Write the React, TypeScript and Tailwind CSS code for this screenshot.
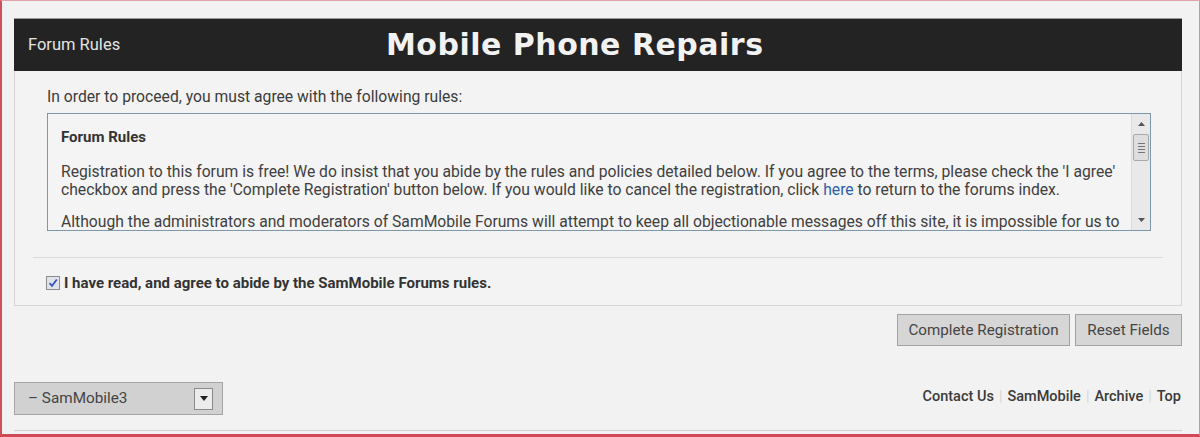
import React from "react";

function Scrollbar() {
  return (
    <div className="w-[19px] h-full bg-[#e9e9e9] border-l border-[#dcdcdc] flex flex-col items-center">
      <div className="h-[20px] w-full flex items-center justify-center">
        <svg width="7" height="4" viewBox="0 0 7 4"><path d="M3.5 0 L7 4 L0 4 Z" fill="#555" /></svg>
      </div>
      <div className="w-[16px] h-[27px] bg-[#dedede] border border-[#a9a9a9] rounded-[2px] flex flex-col items-center justify-center gap-[2px]">
        <div className="w-[7px] h-px bg-[#777]" />
        <div className="w-[7px] h-px bg-[#777]" />
        <div className="w-[7px] h-px bg-[#777]" />
        <div className="w-[7px] h-px bg-[#777]" />
      </div>
      <div className="flex-1" />
      <div className="h-[20px] w-full flex items-center justify-center">
        <svg width="7" height="4" viewBox="0 0 7 4"><path d="M0 0 L7 0 L3.5 4 Z" fill="#555" /></svg>
      </div>
    </div>
  );
}

export default function App() {
  return (
    <div
      className="w-[1200px] h-[437px] box-border bg-[#f2f2f2] border-t border-t-[#e2a4a9] border-l-2 border-l-[#d24f5d] border-r border-r-[#dd8e96] border-b-[3px] border-b-[#cf4959] pt-[17px] pl-[12px] text-[#3a3a3a] overflow-hidden"
      style={{ fontFamily: "Roboto, 'Open Sans', 'Liberation Sans', sans-serif" }}
    >
      <div className="w-[1168px]">
        {/* header */}
        <div className="h-[53px] bg-[#232323] border-t border-[#9a9a9a] flex items-center pl-[14px]">
          <span className="w-[358px] text-[16.5px] text-[#e4e4e4]">Forum Rules</span>
          <span
            className="text-[30px] font-bold text-[#f2f2f2] tracking-[0.5px] leading-none"
            style={{ fontFamily: "'DejaVu Sans', 'Liberation Sans', sans-serif" }}
          >
            Mobile Phone Repairs
          </span>
        </div>

        {/* panel */}
        <div className="h-[235px] border-l border-r border-b border-[#d6d6d6] bg-[#f3f3f3] px-[18px] pt-[17px]">
          <p className="pl-[14px] text-[15.7px] leading-[18px] text-[#3c3c3c]">
            In order to proceed, you must agree with the following rules:
          </p>
          <div className="ml-[14px] mt-[7px] w-[1104px] h-[118px] border border-[#7d97ab] bg-[#f4f4f4] flex overflow-hidden">
            <div className="flex-1 pl-[13px] pt-[14px] text-[15.7px] leading-[18px] text-[#404040] overflow-hidden whitespace-nowrap">
              <div className="font-bold text-[15px] text-[#333]">Forum Rules</div>
              <p className="mt-[17px]">
                Registration to this forum is free! We do insist that you abide by the rules and policies detailed below. If you agree to the terms, please check the 'I agree'
                <br />
                checkbox and press the 'Complete Registration' button below. If you would like to cancel the registration, click{" "}
                <span className="text-[#2c62a8]">here</span> to return to the forums index.
              </p>
              <p className="mt-[14px]">
                Although the administrators and moderators of SamMobile Forums will attempt to keep all objectionable messages off this site, it is impossible for us to
              </p>
            </div>
            <Scrollbar />
          </div>
          <div className="mt-[26px] h-px bg-[#dadada]" />
          <label className="mt-[14px] pl-[13px] flex items-center gap-[4px] text-[15px] font-bold text-[#333]">
            <span className="w-[14px] h-[14px] border border-[#8c8c8c] bg-[#dfe3ea] flex items-center justify-center">
              <svg width="10" height="10" viewBox="0 0 10 10">
                <path d="M1.5 5.2 L4 7.8 L8.8 1.5" stroke="#3a55b8" strokeWidth="1.8" fill="none" />
              </svg>
            </span>
            I have read, and agree to abide by the SamMobile Forums rules.
          </label>
        </div>

        {/* buttons */}
        <div className="mt-[8px] flex justify-end gap-[5px]">
          <button className="w-[173px] h-[32px] bg-[#d6d6d6] border border-[#a3a3a3] text-[15.2px] text-[#444]">
            Complete Registration
          </button>
          <button className="w-[107px] h-[32px] bg-[#d6d6d6] border border-[#a3a3a3] text-[15.2px] text-[#444]">
            Reset Fields
          </button>
        </div>

        {/* footer */}
        <div className="mt-[36px] flex items-center justify-between">
          <div className="w-[209px] h-[33px] bg-[#d1d1d1] border border-[#a5a5a5] flex items-center pl-[13px] pr-[9px]">
            <span className="flex-1 text-[15.3px] text-[#444]">– SamMobile3</span>
            <span className="w-[19px] h-[22px] bg-[#ececec] border border-[#8a8a8a] flex items-center justify-center">
              <svg width="8" height="5" viewBox="0 0 8 5"><path d="M0 0 L8 0 L4 5 Z" fill="#222" /></svg>
            </span>
          </div>
          <div className="flex items-center text-[14.5px] font-medium text-[#3a3a3a] pr-[1px] -mt-[4px]">
            <span>Contact Us</span>
            <span className="mx-[5px] text-[#d6d6d6] font-normal">|</span>
            <span>SamMobile</span>
            <span className="mx-[5px] text-[#d6d6d6] font-normal">|</span>
            <span>Archive</span>
            <span className="mx-[5px] text-[#d6d6d6] font-normal">|</span>
            <span>Top</span>
          </div>
        </div>

        <div className="mt-[15px] h-px bg-[#d0d0d0]" />
      </div>
    </div>
  );
}
